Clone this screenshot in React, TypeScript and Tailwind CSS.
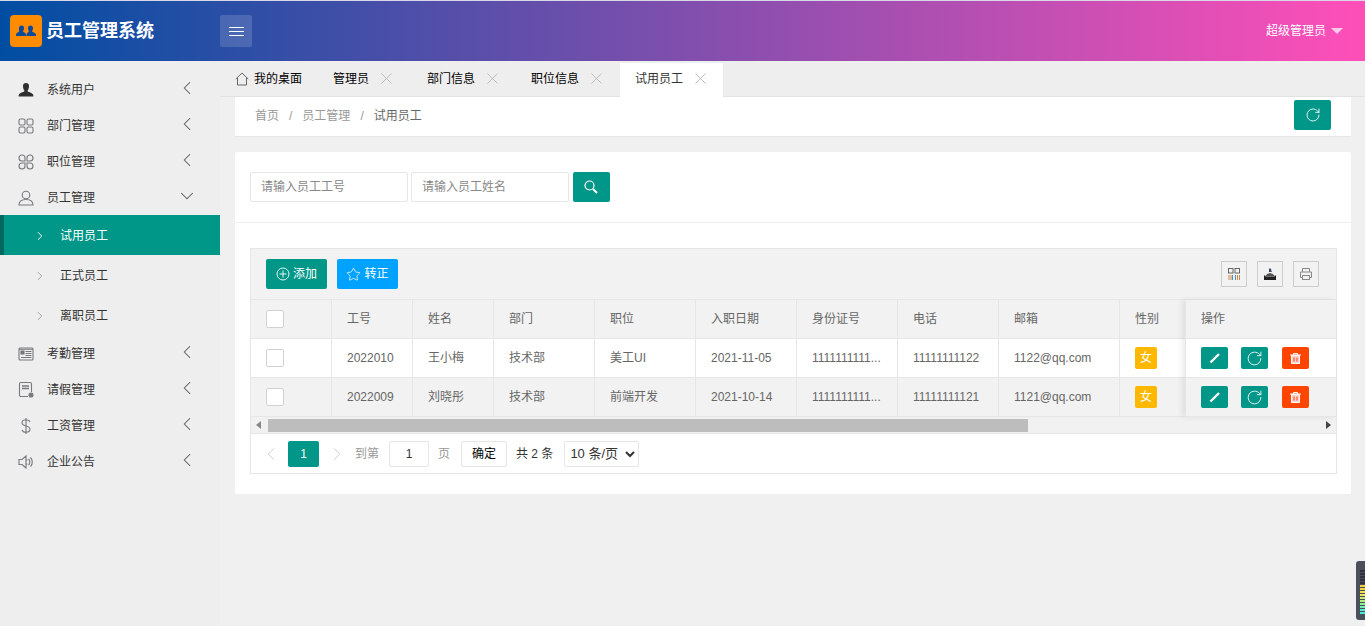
import { ChevronDown, ChevronLeft, ChevronRight, RotateCw, Star, X } from "lucide-react";
import type { ReactNode } from "react";

const I = ({ children, size = 18 }: { children: ReactNode; size?: number }) => (
  <svg width={size} height={size} viewBox="0 0 18 18" fill="none" stroke="#77797c" strokeWidth="1.1">
    {children}
  </svg>
);

const icons: Record<string, ReactNode> = {
  user: (
    <svg width="18" height="18" viewBox="0 0 18 18" fill="#2f2f2f">
      <path d="M6 5a3 3 0 0 1 6 0c0 2.500-1 4.500-1.600 5 .2 1 4.600 1.400 5.600 3.500.4.800.4 1.500.4 2H1.600c0-.5 0-1.200.4-2C3 11.400 7.400 11 7.600 10 7 9.500 6 7.500 6 5z" />
    </svg>
  ),
  dept: (
    <I>
      <rect x="2" y="2" width="6" height="6" rx="1.500" />
      <rect x="10" y="2" width="6" height="6" rx="1.500" />
      <rect x="2" y="10" width="6" height="6" rx="1.500" />
      <rect x="10" y="10" width="6" height="6" rx="1.500" />
    </I>
  ),
  job: (
    <I>
      <path d="M8 8H5a3 3 0 1 1 3-3zM10 8V5a3 3 0 1 1 3 3zM8 10v3a3 3 0 1 1-3-3zM10 10h3a3 3 0 1 1-3 3z" />
    </I>
  ),
  staff: (
    <I>
      <circle cx="9" cy="6" r="3.800" />
      <path d="M2 16c0-3.500 3-5.500 7-5.500s7 2 7 5.500z" />
    </I>
  ),
  attend: (
    <I>
      <rect x="2" y="3" width="14" height="12" rx="1" />
      <path d="M8.500 6.500h6M8.500 8.500h6M8.500 10.500h6M4 12.500h10.500M2 4.200h14" />
      <rect x="4" y="6" width="3" height="3" fill="#77797c" />
    </I>
  ),
  leave: (
    <I>
      <path d="M11 15.500H4A1.500 1.500 0 0 1 2.500 14V3A1.500 1.500 0 0 1 4 1.500h9A1.500 1.500 0 0 1 14.500 3v8" />
      <path d="M5 5h7M5 7.500h7" strokeWidth="1.500" />
      <circle cx="14" cy="14" r="2" fill="#77797c" />
    </I>
  ),
  money: (
    <I>
      <path d="M13 5c-.5-1.500-2-2.200-4-2.200-2.400 0-4 1.200-4 3s1.600 2.600 4 3.200 4 1.400 4 3.200-1.600 3-4 3c-2 0-3.500-.8-4-2.200M9 1v16" />
    </I>
  ),
  notice: (
    <I>
      <path d="M2 6.500h3L9 3v12l-4-3.500H2zM11.500 6a4 4 0 0 1 0 6M9 7h1.500M9 11h1.500" />
      <path d="M13.500 4.500a6.500 6.500 0 0 1 0 9" />
    </I>
  ),
};

const menuTop = [
  { label: "系统用户", icon: "user" },
  { label: "部门管理", icon: "dept" },
  { label: "职位管理", icon: "job" },
];
const menuBottom = [
  { label: "考勤管理", icon: "attend" },
  { label: "请假管理", icon: "leave" },
  { label: "工资管理", icon: "money" },
  { label: "企业公告", icon: "notice" },
];

function MenuItem({ label, icon, open }: { label: string; icon: string; open?: boolean }) {
  return (
    <div className="flex h-9 items-center pl-[17px] pr-[22px] pt-[2px] text-xs text-[#333]">
      <span className="flex w-[30px] shrink-0">{icons[icon]}</span>
      <span className="flex-1">{label}</span>
      {open ? (
        <ChevronDown size={22} strokeWidth={1.100} className="-mt-1 text-[#555]" />
      ) : (
        <ChevronLeft size={22} strokeWidth={1.100} className="-mt-1 text-[#555]" />
      )}
    </div>
  );
}

function SubItem({ label, active }: { label: string; active?: boolean }) {
  return (
    <div
      className={
        active
          ? "flex h-10 items-center border-l-4 border-[#00695f] bg-[#009688] pl-[29px] pt-[2px] text-xs text-white"
          : "flex h-10 items-center pl-[33px] pt-[2px] text-xs text-[#333]"
      }
    >
      <ChevronRight size={14} strokeWidth={active ? 1.600 : 1.200} className={active ? "mr-[13px]" : "mr-[13px] text-[#8a8078]"} />
      {label}
    </div>
  );
}

function Tab({ label, active }: { label: string; active?: boolean }) {
  return (
    <div
      className={
        active
          ? "-mb-px flex h-[34px] w-[103px] items-center bg-white pb-[3px] pl-[15px] text-xs text-[#333]"
          : "flex h-[35px] items-center text-xs text-black"
      }
    >
      {label}
      <X size={19} strokeWidth={1.100} className="ml-[8px] text-[#b4b4b4]" />
    </div>
  );
}

const cols = [
  { t: "工号", w: "w-[81px]" },
  { t: "姓名", w: "w-[81px]" },
  { t: "部门", w: "w-[101px]" },
  { t: "职位", w: "w-[101px]" },
  { t: "入职日期", w: "w-[101px]" },
  { t: "身份证号", w: "w-[101px]" },
  { t: "电话", w: "w-[101px]" },
  { t: "邮箱", w: "w-[121px]" },
];

const rows = [
  ["2022010", "王小梅", "技术部", "美工UI", "2021-11-05", "1111111111...", "11111111122", "1122@qq.com"],
  ["2022009", "刘晓彤", "技术部", "前端开发", "2021-10-14", "1111111111...", "11111111121", "1121@qq.com"],
];

const Check = () => <div className="h-[18px] w-[18px] rounded-[2px] border border-[#d2d2d2] bg-white" />;

function Row({ values, head, alt }: { values: string[]; head?: boolean; alt?: boolean }) {
  return (
    <div className={`flex h-[39px] border-b border-[#e6e6e6] text-xs text-[#666] ${alt || head ? "bg-[#f2f2f2]" : "bg-white"}`}>
      <div className="flex w-[81px] shrink-0 items-center border-r border-[#e6e6e6] pl-[15px]">
        <Check />
      </div>
      {values.map((v, i) => (
        <div key={i} className={`flex shrink-0 items-center border-r border-[#e6e6e6] pl-[15px] ${cols[i].w}`}>
          {v}
        </div>
      ))}
      <div className="flex w-[70px] shrink-0 items-center pl-[15px]">
        {head ? "性别" : <span className="flex h-[22px] w-[22px] items-center justify-center rounded-[2px] bg-[#ffb800] text-xs text-white">女</span>}
      </div>
    </div>
  );
}

function Actions({ alt }: { alt?: boolean }) {
  return (
    <div className={`flex h-[39px] items-center border-b border-[#e6e6e6] pl-[15px] ${alt ? "bg-[#f2f2f2]" : "bg-white"}`}>
      <span className="flex h-[22px] w-[27px] items-center justify-center rounded-[2px] bg-[#009688]">
        <svg width="12" height="12" viewBox="0 0 12 12" fill="none" stroke="white">
          <path d="M1.500 10.500 10 2" strokeWidth="2.400" />
        </svg>
      </span>
      <span className="ml-[13px] flex h-[22px] w-[27px] items-center justify-center rounded-[2px] bg-[#009688]">
        <RotateCw size={17} strokeWidth={1.200} className="text-white" />
      </span>
      <span className="ml-[14px] flex h-[22px] w-[27px] items-center justify-center rounded-[2px] bg-[#ff4500]">
        <svg width="13" height="13" viewBox="0 0 13 13" fill="#ffd0d0" stroke="white" strokeWidth="1">
          <path d="M1 3h11M4.500 3V1.500h4V3" fill="none" />
          <path d="M2.500 3.500h8v8h-8z" />
          <path d="M5 5.500v4M8 5.500v4" stroke="#ff4500" />
        </svg>
      </span>
    </div>
  );
}

const ToolBtn = ({ children }: { children: ReactNode }) => (
  <span className="flex h-[26px] w-[26px] items-center justify-center border border-[#ccc]">{children}</span>
);

const meter = [
  "#2f333d", "#2f333d", "#2f333d", "#2f333d", "#2f333d",
  "#f7d23c", "#f7d23c", "#f4dc48", "#ece658", "#c8ec70", "#b0ee80", "#88ee98", "#70eeb0", "#50eed0", "#40eee0",
];

export default function App() {
  return (
    <div className="flex h-[626px] flex-col overflow-hidden bg-[#f0f0f0] font-['Liberation_Sans','Noto_Sans_CJK_SC',sans-serif]">
      <header className="flex h-[61px] shrink-0 items-center border-t border-[#d8d8e8] bg-linear-to-r/srgb from-[#004ea2] to-[#ff4fb8] pr-[22px]">
        <div className="flex w-[220px] items-center pl-[10px]">
          <span className="flex h-8 w-8 items-center justify-center rounded-[4px] bg-[#ff8c00]">
            <svg width="20" height="16" viewBox="0 0 20 16" fill="#0d4a9c">
              <path d="M3 5a2.500 2.500 0 0 1 5 0c0 2-.8 3-1 3.500 0 .7 3 1 3 3.500v1H0v-1c0-2.500 3-2.800 3-3.500C3 8 3 7 3 5z" />
              <path d="M12 5a2.500 2.500 0 0 1 5 0c0 2-.8 3-1 3.500 0 .7 4 1 4 3.500v1H10.500v-1c0-2.500 2.500-2.800 2.500-3.500-.2-.5-1-1.500-1-3.500z" />
            </svg>
          </span>
          <span className="ml-1 text-lg font-bold text-white">员工管理系统</span>
        </div>
        <span className="flex h-8 w-8 flex-col items-center justify-center gap-[3px] rounded-[2px] bg-white/15">
          <i className="h-px w-[15px] bg-white" />
          <i className="h-px w-[15px] bg-white" />
          <i className="h-px w-[15px] bg-white" />
        </span>
        <div className="ml-auto flex items-center text-xs text-white">
          超级管理员
          <span className="ml-[5px] h-0 w-0 border-x-[6px] border-t-[6px] border-x-transparent border-t-white/70" />
        </div>
      </header>

      <div className="flex min-h-0 flex-1">
        <aside className="w-[220px] shrink-0 bg-[#eeeeee] pt-[10px]">
          {menuTop.map((m) => (
            <MenuItem key={m.label} {...m} />
          ))}
          <MenuItem label="员工管理" icon="staff" open />
          <SubItem label="试用员工" active />
          <SubItem label="正式员工" />
          <SubItem label="离职员工" />
          {menuBottom.map((m) => (
            <MenuItem key={m.label} {...m} />
          ))}
        </aside>

        <main className="min-w-0 flex-1">
          <div className="flex h-9 items-end border-b border-[#e2e2e2] bg-[#eeeeef] pl-[15px]">
            <div className="flex h-[35px] w-[85px] items-center text-xs text-black">
              <svg width="14" height="14" viewBox="0 0 14 14" fill="none" stroke="#666" strokeWidth="1" className="mr-[5px]">
                <path d="M.8 7 7 1l6.200 6M2.500 6v7h9V6" />
              </svg>
              我的桌面
            </div>
            <div className="ml-[13px] w-[94px]">
              <Tab label="管理员" />
            </div>
            <div className="w-[104px]">
              <Tab label="部门信息" />
            </div>
            <div className="w-[89px]">
              <Tab label="职位信息" />
            </div>
            <Tab label="试用员工" active />
          </div>

          <div className="px-[15px]">
            <div className="mr-[-1px] flex h-10 items-center justify-between border-b border-[#e6e6e6] bg-white pb-[3px] pl-5 pr-5 text-xs text-[#999]">
              <div className="flex items-center pt-[2px]">
                首页
                <span className="mx-[10px]">/</span>
                员工管理
                <span className="mx-[10px]">/</span>
                <span className="text-[#666]">试用员工</span>
              </div>
              <span className="flex h-[30px] w-[37px] items-center justify-center rounded-[2px] bg-[#009688]">
                <RotateCw size={16} strokeWidth={1.300} className="text-white" />
              </span>
            </div>

            <section className="mr-[-1px] mt-[15px] h-[342px] rounded-[2px] bg-white">
              <div className="flex h-[71px] items-center gap-[3px] border-b border-[#eeeeee] pl-[15px]">
                <div className="flex h-[30px] w-[158px] items-center rounded-[2px] border border-[#e6e6e6] pl-[10px] text-xs text-[#888]">请输入员工工号</div>
                <div className="flex h-[30px] w-[158px] items-center rounded-[2px] border border-[#e6e6e6] pl-[10px] text-xs text-[#888]">请输入员工姓名</div>
                <span className="ml-[1px] flex h-[30px] w-[37px] items-center justify-center rounded-[2px] bg-[#009688]">
                  <svg width="14" height="14" viewBox="0 0 14 14" fill="none" stroke="white" className="-ml-[1px]">
                    <circle cx="5.500" cy="5.500" r="4.500" strokeWidth="1.200" />
                    <path d="M9 9l4 4" strokeWidth="2" />
                  </svg>
                </span>
              </div>

              <div className="ml-[15px] mr-[14px] mt-[25px] border border-[#e6e6e6]">
                <div className="flex h-[51px] items-center border-b border-[#e6e6e6] bg-[#f2f2f2] pl-[15px] pr-[17px]">
                  <span className="flex h-[30px] w-[61px] items-center justify-center rounded-[2px] bg-[#009688] text-xs text-white">
                    <svg width="14" height="14" viewBox="0 0 14 14" fill="none" stroke="white" strokeWidth="0.900" className="mr-[3px]">
                      <circle cx="7" cy="7" r="6" />
                      <path d="M7 3.500v7M3.500 7h7" />
                    </svg>
                    添加
                  </span>
                  <span className="ml-[10px] flex h-[30px] w-[61px] items-center justify-center rounded-[2px] bg-[#00a2ff] text-xs text-white">
                    <Star size={15} strokeWidth={1.200} className="mr-[3px]" />
                    转正
                  </span>
                  <div className="ml-auto flex gap-[10px]">
                    <ToolBtn>
                      <svg width="14" height="14" viewBox="0 0 14 14" fill="none" stroke="#666" strokeWidth="1">
                        <rect x="1.500" y="1.500" width="4.500" height="4.500" />
                        <rect x="8" y="1.500" width="4.500" height="4.500" />
                        <path d="M2 8v5M4 8v5" stroke="#c98a4a" />
                        <path d="M5.500 8v5M8.500 8v5" stroke="#4a90c0" />
                        <path d="M10.500 8v5M12.500 8v5" stroke="#c98a4a" />
                      </svg>
                    </ToolBtn>
                    <ToolBtn>
                      <svg width="14" height="14" viewBox="0 0 14 14" fill="#222">
                        <path d="M1 8.500h1.500v1h9v-1H13V13H1z" />
                        <path d="M2.500 9.500 4 7l3-1 3 1 1.500 2.500z" fill="#555" />
                        <path d="M6 1.500h1.800l1 3.500H6z" fill="#3a4a60" />
                      </svg>
                    </ToolBtn>
                    <ToolBtn>
                      <svg width="14" height="14" viewBox="0 0 14 14" fill="none" stroke="#888" strokeWidth="1">
                        <path d="M3.500 5V1.500h7V5M3.500 10.500H1.500V5h11v5.500h-2" />
                        <rect x="3.500" y="8.500" width="7" height="4" />
                      </svg>
                    </ToolBtn>
                  </div>
                </div>

                <div className="flex">
                  <div className="min-w-0 flex-1 overflow-hidden">
                    <Row head values={cols.map((c) => c.t)} />
                    <Row values={rows[0]} />
                    <Row alt values={rows[1]} />
                  </div>
                  <div className="w-[151px] shrink-0 border-l border-[#e6e6e6] shadow-[-3px_0_6px_rgba(0,0,0,0.08)]">
                    <div className="flex h-[39px] items-center border-b border-[#e6e6e6] bg-[#f2f2f2] pl-[15px] text-xs text-[#666]">操作</div>
                    <Actions />
                    <Actions alt />
                  </div>
                </div>

                <div className="flex h-[17px] items-center border-b border-[#e6e6e6] bg-[#f1f1f1]">
                  <span className="ml-[5px] h-0 w-0 border-y-[4px] border-r-[5px] border-y-transparent border-r-[#888]" />
                  <span className="ml-[7px] h-[13px] w-[760px] bg-[#bdbdbd]" />
                  <span className="ml-auto mr-[5px] h-0 w-0 border-y-[4px] border-l-[5px] border-y-transparent border-l-[#444]" />
                </div>

                <div className="flex h-[39px] items-center pl-[9px] text-xs text-[#999]">
                  <ChevronLeft size={22} strokeWidth={1} className="text-[#c8c8c8]" />
                  <span className="ml-[6px] flex h-[26px] w-[31px] items-center justify-center rounded-[2px] bg-[#009688] text-white">1</span>
                  <ChevronRight size={22} strokeWidth={1} className="ml-[7px] text-[#c8c8c8]" />
                  <span className="ml-[7px]">到第</span>
                  <span className="ml-[10px] flex h-[26px] w-10 items-center justify-center rounded-[2px] border border-[#e6e6e6] text-[#333]">1</span>
                  <span className="ml-[9px]">页</span>
                  <span className="ml-[11px] flex h-[26px] w-[46px] items-center justify-center rounded-[2px] border border-[#e6e6e6] text-black">确定</span>
                  <span className="ml-[9px] text-[#333]">共 2 条</span>
                  <select className="ml-[11px] h-[26px] w-[75px] rounded-[2px] border border-[#e6e6e6] bg-white pl-[1px] text-[13px] text-[#333]" defaultValue="10">
                    <option value="10">10 条/页</option>
                    <option value="20">20 条/页</option>
                  </select>
                </div>
              </div>
            </section>
          </div>
        </main>
      </div>

      <div className="fixed right-0 top-[561px] flex h-[59px] w-[9px] flex-col justify-end gap-px rounded-l-[3px] bg-[#4a4f5c] pb-[6px] pl-[4px]">
        {meter.map((c, i) => (
          <i key={i} className="h-[2px] w-full shrink-0" style={{ backgroundColor: c }} />
        ))}
      </div>
    </div>
  );
}
